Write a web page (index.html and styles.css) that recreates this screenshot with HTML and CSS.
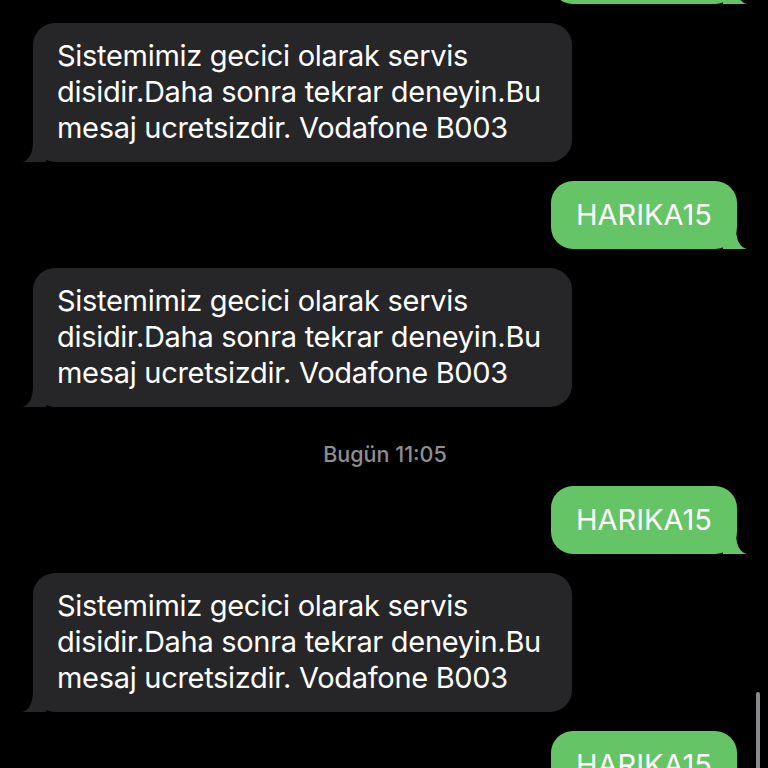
FILE: index.html
```html
<!DOCTYPE html>
<html lang="tr">
<head>
  <meta charset="UTF-8">
  <meta name="viewport" content="width=device-width, initial-scale=1.0">
  <title>Vodafone</title>
  <link rel="stylesheet" href="styles.css">
</head>
<body>

  <div class="thread">
    <div class="bubble out">HARIKA15</div>

    <div class="bubble in">Sistemimiz gecici olarak servis<br>disidir.Daha sonra tekrar deneyin.Bu<br>mesaj ucretsizdir. Vodafone B003</div>

    <div class="bubble out">HARIKA15</div>

    <div class="bubble in">Sistemimiz gecici olarak servis<br>disidir.Daha sonra tekrar deneyin.Bu<br>mesaj ucretsizdir. Vodafone B003</div>

    <div class="stamp">Bugün 11:05</div>

    <div class="bubble out">HARIKA15</div>

    <div class="bubble in">Sistemimiz gecici olarak servis<br>disidir.Daha sonra tekrar deneyin.Bu<br>mesaj ucretsizdir. Vodafone B003</div>

    <div class="bubble out">HARIKA15</div>
  </div>

  <div class="scrollbar"></div>

</body>
</html>
```

FILE: styles.css
```css
html, body {
  margin: 0;
  padding: 0;
  height: 768px;
  overflow: hidden;
  background-color: #000;
}
body {
  font-family: Inter, "Noto Sans", sans-serif;
  position: relative;
}
.thread {
  display: flex;
  flex-direction: column;
  gap: 19px;
  margin-top: -64px;
  padding: 0 31px 0 33px;
}
.bubble {
  position: relative;
  font-size: 29px;
  line-height: 36px;
  color: #fff;
  border-radius: 22px;
  letter-spacing: -0.3px;
}
.bubble.in {
  align-self: flex-start;
  width: 491px;
  padding: 15px 24px 16px 24px;
  background-color: #262628;
}
.bubble.out {
  align-self: flex-end;
  padding: 16px 25px;
  background-color: #65c466;
  letter-spacing: 0;
}
.bubble.in::before {
  content: "";
  position: absolute;
  left: -11px;
  bottom: 0;
  width: 24px;
  height: 24px;
  background-color: #262628;
  clip-path: path('M0 24 Q10 22 11 5 L11 0 L24 0 L24 24 Z');
}
.bubble.out::before {
  content: "";
  position: absolute;
  right: -10px;
  bottom: 0;
  width: 24px;
  height: 24px;
  background-color: #65c466;
  clip-path: path('M24 24 Q14 22 13 5 L13 0 L0 0 L0 24 Z');
}
.stamp {
  padding-top: 16px;
  text-align: center;
  font-size: 21.5px;
  line-height: 25px;
  font-weight: 500;
  color: #8e8e93;
}
.scrollbar {
  position: absolute;
  right: 8px;
  top: 692px;
  width: 4px;
  height: 90px;
  border-radius: 2px;
  background-color: #8a8a8e;
}
```
